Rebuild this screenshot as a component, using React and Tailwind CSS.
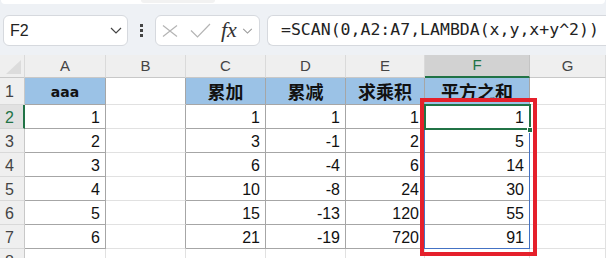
import React from "react";

const COLS = ["A", "B", "C", "D", "E", "F", "G"];

const HEAD = ["aaa", "", "累加", "累减", "求乘积", "平方之和", ""];
const A = [1, 2, 3, 4, 5, 6];
const C = [1, 3, 6, 10, 15, 21];
const D = [1, -1, -4, -8, -13, -19];
const E = [1, 2, 6, 24, 120, 720];
const F = [1, 5, 14, 30, 55, 91];

// columns with the dark table borders (A, C..F)
const boxed = (c) => c === 0 || (c >= 2 && c <= 5);

const Chevron = ({ className }) => (
  <svg className={className} viewBox="0 0 12 7" fill="none" stroke="currentColor" strokeWidth="1.2">
    <path d="M1 1l5 5 5-5" />
  </svg>
);

const Toolbar = () => (
  <div className="h-[55px] bg-[#eef1f5] flex flex-col">
    <div className="h-[4px] mx-[1px] bg-white rounded-b-[6px] relative">
      <div className="absolute left-[140px] top-0 w-[74px] h-[3px] bg-[#f2f2f2] rounded-b-[4px]" />
    </div>
    <div className="mt-[11px] h-[31px] flex items-center">
      {/* name box */}
      <div className="ml-[3px] w-[125px] h-full bg-white border border-[#d6d9de] rounded-[6px] flex items-center pl-[6px] pr-[5px]">
        <span className="flex-1 text-[16px] text-[#222] font-['Liberation_Sans',sans-serif]">F2</span>
        <Chevron className="w-[12px] h-[7px] text-[#444]" />
      </div>
      {/* dots */}
      <div className="w-[27px] flex flex-col items-center gap-[2px]">
        <span className="w-[3px] h-[3px] bg-[#444]" />
        <span className="w-[3px] h-[3px] bg-[#444]" />
        <span className="w-[3px] h-[3px] bg-[#444]" />
      </div>
      {/* fx box */}
      <div className="w-[105px] h-full bg-white border border-[#d6d9de] rounded-[6px] flex items-center pl-[6px]">
        <svg className="w-[16px] h-[12px]" viewBox="0 0 16 12" fill="none" stroke="#b4b4b4" strokeWidth="1.2">
          <path d="M1 0.5l14 11M15 0.5l-14 11" />
        </svg>
        <svg className="ml-[12px] w-[21px] h-[15px]" viewBox="0 0 21 15" fill="none" stroke="#b4b4b4" strokeWidth="1.2">
          <path d="M1 7.5l6.5 6.5L20 1" />
        </svg>
        <span className="ml-[10px] text-[22px] leading-none italic text-[#333] font-['Liberation_Serif',serif] -mt-[2px]">fx</span>
        <Chevron className="ml-[5px] w-[11px] h-[6px] text-[#999]" />
      </div>
      {/* formula */}
      <div className="ml-[7px] flex-1 h-full bg-white border border-r-0 border-[#d6d9de] rounded-l-[6px] flex items-center pl-[13px] overflow-hidden whitespace-nowrap">
        <span className="text-[16.5px] text-[#222] font-['DejaVu_Sans_Mono',monospace]">=SCAN(0,A2:A7,LAMBDA(x,y,x+y^2))</span>
      </div>
    </div>
  </div>
);

const cellValue = (r, c) => {
  const i = r - 2;
  if (c === 0) return A[i];
  if (c === 2) return C[i];
  if (c === 3) return D[i];
  if (c === 4) return E[i];
  if (c === 5) return F[i];
  return "";
};

const Sheet = () => {
  const rows = [1, 2, 3, 4, 5, 6, 7, 8];
  return (
    <div className="relative grid grid-cols-[25px_81px_80px_80px_80px_79px_105px_1fr] grid-rows-[23px_27px_repeat(7,24px)] bg-white font-['Liberation_Sans',sans-serif]">
      {/* column header row */}
      <div className="bg-[#efefef] border-r border-b border-r-[#dadada] border-b-[#c8c8c8] relative overflow-hidden">
        <svg className="absolute right-[3px] bottom-[3px] w-[15px] h-[14px]" viewBox="0 0 15 14">
          <path d="M15 0V14H0Z" fill="#dcdcdc" />
        </svg>
      </div>
      {COLS.map((l) =>
        l === "F" ? (
          <div key={l} className="bg-[#d2d2d2] border-r border-r-[#c4c4c4] border-b-2 border-b-[#217346] flex items-center justify-center text-[15px] text-[#217346] pb-[1px]">
            {l}
          </div>
        ) : (
          <div key={l} className="bg-[#efefef] border-r border-b border-r-[#dadada] border-b-[#c8c8c8] flex items-center justify-center text-[15px] text-[#444]">
            {l}
          </div>
        )
      )}

      {rows.map((r) => (
        <React.Fragment key={r}>
          {r === 2 ? (
            <div className="bg-[#e1e1e1] border-r-2 border-b border-r-[#217346] border-b-[#d4d4d4] flex items-center pl-[5px] pt-[2px] text-[16px] text-[#217346]">
              {r}
            </div>
          ) : (
            <div className="bg-[#efefef] border-r border-b border-r-[#c8c8c8] border-b-[#d9d9d9] flex items-center pl-[5px] pt-[2px] text-[16px] text-[#444]">
              {r}
            </div>
          )}
          {COLS.map((l, c) => {
            const inTable = r <= 7 && boxed(c);
            const rightDark = r <= 7 && (boxed(c) || boxed(c + 1));
            const cls = [
              "border-r border-b flex items-center",
              rightDark ? "border-r-[#a6a6a6]" : "border-r-[#e1e1e1]",
              inTable ? "border-b-[#a6a6a6]" : "border-b-[#e1e1e1]",
              r === 1 && boxed(c) ? "bg-[#9bc2e6] justify-center" : "justify-end pr-[5px]",
            ].join(" ");
            if (r === 1) {
              return (
                <div key={l} className={cls}>
                  {c === 0 ? (
                    <span className="text-[14px] font-bold text-[#111] font-['DejaVu_Sans',sans-serif] pt-[2px]">{HEAD[c]}</span>
                  ) : (
                    <span className="text-[18px] font-bold text-[#111] font-['Noto_Sans_CJK_SC',sans-serif] leading-none">{HEAD[c]}</span>
                  )}
                </div>
              );
            }
            return (
              <div key={l} className={cls + " text-[16px] text-[#111] pt-[3px]"}>
                {r <= 7 ? cellValue(r, c) : ""}
              </div>
            );
          })}
        </React.Fragment>
      ))}

      {/* spill range outline F2:F7 */}
      <div className="absolute left-[424px] top-[49px] w-[106px] h-[145px] border border-[#4472c4] pointer-events-none" />
      {/* active cell F2 */}
      <div className="absolute left-[424px] top-[49px] w-[107px] h-[26px] border-2 border-[#217346] pointer-events-none" />
      <div className="absolute left-[527px] top-[72px] w-[6px] h-[6px] bg-[#217346] border border-white pointer-events-none" />
      {/* red annotation box */}
      <div className="absolute left-[420px] top-[43px] w-[117px] h-[158px] border-4 border-[#e5202b] pointer-events-none" />
    </div>
  );
};

export default function App() {
  return (
    <div className="w-[606px] h-[258px] overflow-hidden bg-white">
      <Toolbar />
      <Sheet />
    </div>
  );
}
